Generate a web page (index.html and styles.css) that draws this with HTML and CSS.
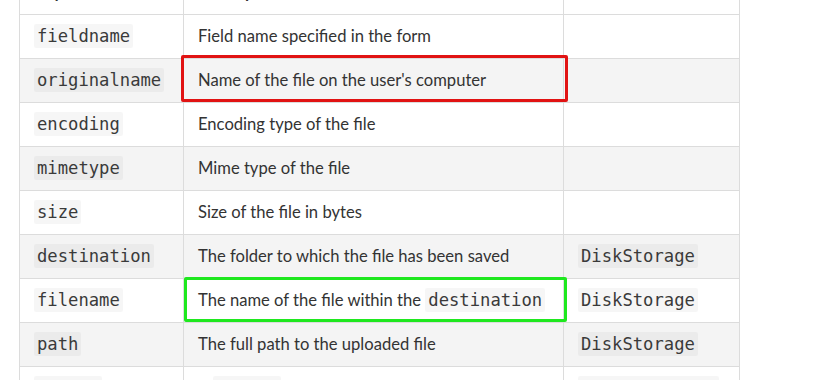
FILE: index.html
```html
<!DOCTYPE html>
<html>
<head>
<meta charset="utf-8">
<link rel="stylesheet" href="styles.css">
</head>
<body>
<div class="frame">
  <table class="doc">
    <colgroup>
      <col class="c1"><col class="c2"><col class="c3">
    </colgroup>
    <thead>
      <tr><th>Key</th><th>Description</th><th>Note</th></tr>
    </thead>
    <tbody>
      <tr><td><code>fieldname</code></td><td>Field name specified in the form</td><td></td></tr>
      <tr><td><code>originalname</code></td><td>Name of the file on the user's computer</td><td></td></tr>
      <tr><td><code>encoding</code></td><td>Encoding type of the file</td><td></td></tr>
      <tr><td><code>mimetype</code></td><td>Mime type of the file</td><td></td></tr>
      <tr><td><code>size</code></td><td>Size of the file in bytes</td><td></td></tr>
      <tr><td><code>destination</code></td><td>The folder to which the file has been saved</td><td><code>DiskStorage</code></td></tr>
      <tr><td><code>filename</code></td><td>The name of the file within the <code>destination</code></td><td><code>DiskStorage</code></td></tr>
      <tr><td><code>path</code></td><td>The full path to the uploaded file</td><td><code>DiskStorage</code></td></tr>
      <tr><td><code>buffer</code></td><td>A <code>Buffer</code> of the entire file</td><td><code>MemoryStorage</code></td></tr>
    </tbody>
  </table>
  <div class="mark mark-red"></div>
  <div class="mark mark-green"></div>
</div>
</body>
</html>
```
FILE: styles.css
```css
html, body {
  margin: 0;
  padding: 0;
  background: #ffffff;
}
body {
  font-family: Lato, "Open Sans", sans-serif;
  color: #333333;
}
.frame {
  position: relative;
  display: flow-root;
  padding-left: 19px;
  height: 380px;
  overflow: hidden;
}
.doc {
  margin-top: -30px;
  border-collapse: collapse;
  table-layout: fixed;
  width: 720px;
}
.c1 { width: 164px; }
.c2 { width: 380px; }
.c3 { width: 176px; }
.doc th, .doc td {
  border: 1px solid #dcdcdc;
  height: 41px;
  padding: 0 14px 2px;
  text-align: left;
  vertical-align: middle;
  font-size: 16.6px;
  white-space: nowrap;
}
.doc th {
  font-weight: 700;
}
.doc tbody tr:nth-child(2n) {
  background: #f4f4f4;
}
.doc code {
  font-family: "DejaVu Sans Mono", monospace;
  font-size: 17.2px;
  background: rgba(0, 0, 0, 0.035);
  padding: 2px 3px;
  border-radius: 2px;
  color: #3a3a3a;
}
.mark {
  position: absolute;
  box-sizing: border-box;
  border: 3px solid;
  border-radius: 2px;
}
.mark-red {
  left: 181px;
  top: 55px;
  width: 387px;
  height: 47px;
  border-color: #e11313;
}
.mark-green {
  left: 184px;
  top: 277px;
  width: 383px;
  height: 45px;
  border-color: #1fe81f;
}
```
